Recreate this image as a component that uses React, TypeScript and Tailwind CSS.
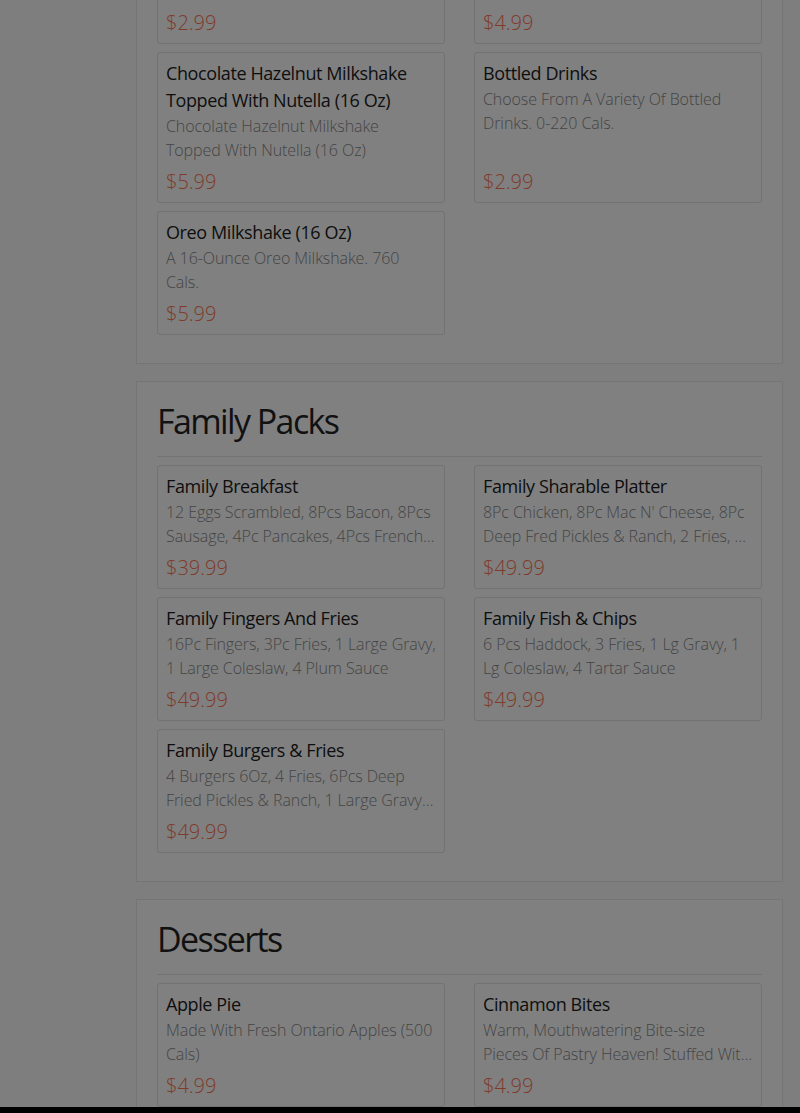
type Item = {
  name: string;
  description: string;
  price: string;
};

type Section = {
  title: string;
  items: Item[];
};

const sections: Section[] = [
  {
    title: "Beverages",
    items: [
      {
        name: "Fountain Drinks",
        description: "Choose From A Variety Of Fountain Drinks. 0-270 Cals.",
        price: "$2.99",
      },
      {
        name: "Vanilla Milkshake (16 Oz)",
        description: "A 16-Ounce Vanilla Milkshake. 700 Cals.",
        price: "$4.99",
      },
      {
        name: "Chocolate Hazelnut Milkshake Topped With Nutella (16 Oz)",
        description: "Chocolate Hazelnut Milkshake Topped With Nutella (16 Oz)",
        price: "$5.99",
      },
      {
        name: "Bottled Drinks",
        description: "Choose From A Variety Of Bottled Drinks. 0-220 Cals.",
        price: "$2.99",
      },
      {
        name: "Oreo Milkshake (16 Oz)",
        description: "A 16-Ounce Oreo Milkshake. 760 Cals.",
        price: "$5.99",
      },
    ],
  },
  {
    title: "Family Packs",
    items: [
      {
        name: "Family Breakfast",
        description:
          "12 Eggs Scrambled, 8Pcs Bacon, 8Pcs Sausage, 4Pc Pancakes, 4Pcs French Toast, 4 Hash Browns",
        price: "$39.99",
      },
      {
        name: "Family Sharable Platter",
        description:
          "8Pc Chicken, 8Pc Mac N' Cheese, 8Pc Deep Fred Pickles & Ranch, 2 Fries, 1 Large Gravy",
        price: "$49.99",
      },
      {
        name: "Family Fingers And Fries",
        description: "16Pc Fingers, 3Pc Fries, 1 Large Gravy, 1 Large Coleslaw, 4 Plum Sauce",
        price: "$49.99",
      },
      {
        name: "Family Fish & Chips",
        description: "6 Pcs Haddock, 3 Fries, 1 Lg Gravy, 1 Lg Coleslaw, 4 Tartar Sauce",
        price: "$49.99",
      },
      {
        name: "Family Burgers & Fries",
        description:
          "4 Burgers 6Oz, 4 Fries, 6Pcs Deep Fried Pickles & Ranch, 1 Large Gravy, 4 Drinks",
        price: "$49.99",
      },
    ],
  },
  {
    title: "Desserts",
    items: [
      {
        name: "Apple Pie",
        description: "Made With Fresh Ontario Apples (500 Cals)",
        price: "$4.99",
      },
      {
        name: "Cinnamon Bites",
        description:
          "Warm, Mouthwatering Bite-size Pieces Of Pastry Heaven! Stuffed With Cinnamon Sugar",
        price: "$4.99",
      },
      {
        name: "Chocolate Brownie",
        description: "Rich Chocolate Brownie With Fudge Icing",
        price: "$3.99",
      },
    ],
  },
];

const MenuCard = ({ item }: { item: Item }) => (
  <div className="flex flex-col rounded-[3px] border border-[#727272] bg-[#808080] px-2 pt-[7px] pb-[6px]">
    <h3 className="text-[18px] leading-[27px] tracking-[-0.4px] text-[#0e0e0e]">{item.name}</h3>
    <p className="line-clamp-2 text-[16px] font-light leading-6 tracking-[-0.08px] text-[#444]">
      {item.description}
    </p>
    <p className="mt-auto pt-[6px] text-[20px] font-light leading-[28px] text-[#7f3a2a]">
      {item.price}
    </p>
  </div>
);

const MenuSection = ({ section }: { section: Section }) => (
  <section className="mb-[17px] border border-[#757575] bg-[#808080] px-5 pt-5 pb-7">
    <h2 className="text-[34px] leading-[38px] tracking-[-1.6px] text-[#111]">{section.title}</h2>
    <hr className="mt-4 border-0 border-t border-[#737373]" />
    <div className="mt-2 grid grid-cols-2 gap-x-[29px] gap-y-2">
      {section.items.map((item) => (
        <MenuCard key={item.name} item={item} />
      ))}
    </div>
  </section>
);

export default function App() {
  return (
    <div
      className="relative h-[1113px] overflow-hidden bg-[#7e7e7e]"
      style={{ fontFamily: '"Open Sans", "Noto Sans", sans-serif' }}
    >
      <div className="-mt-[164px] flex">
        <div className="w-[136px] shrink-0" />
        <main className="w-[647px] shrink-0">
          {sections.map((section) => (
            <MenuSection key={section.title} section={section} />
          ))}
        </main>
      </div>
      <div className="absolute inset-x-0 bottom-0 h-[6px] bg-black" />
    </div>
  );
}
